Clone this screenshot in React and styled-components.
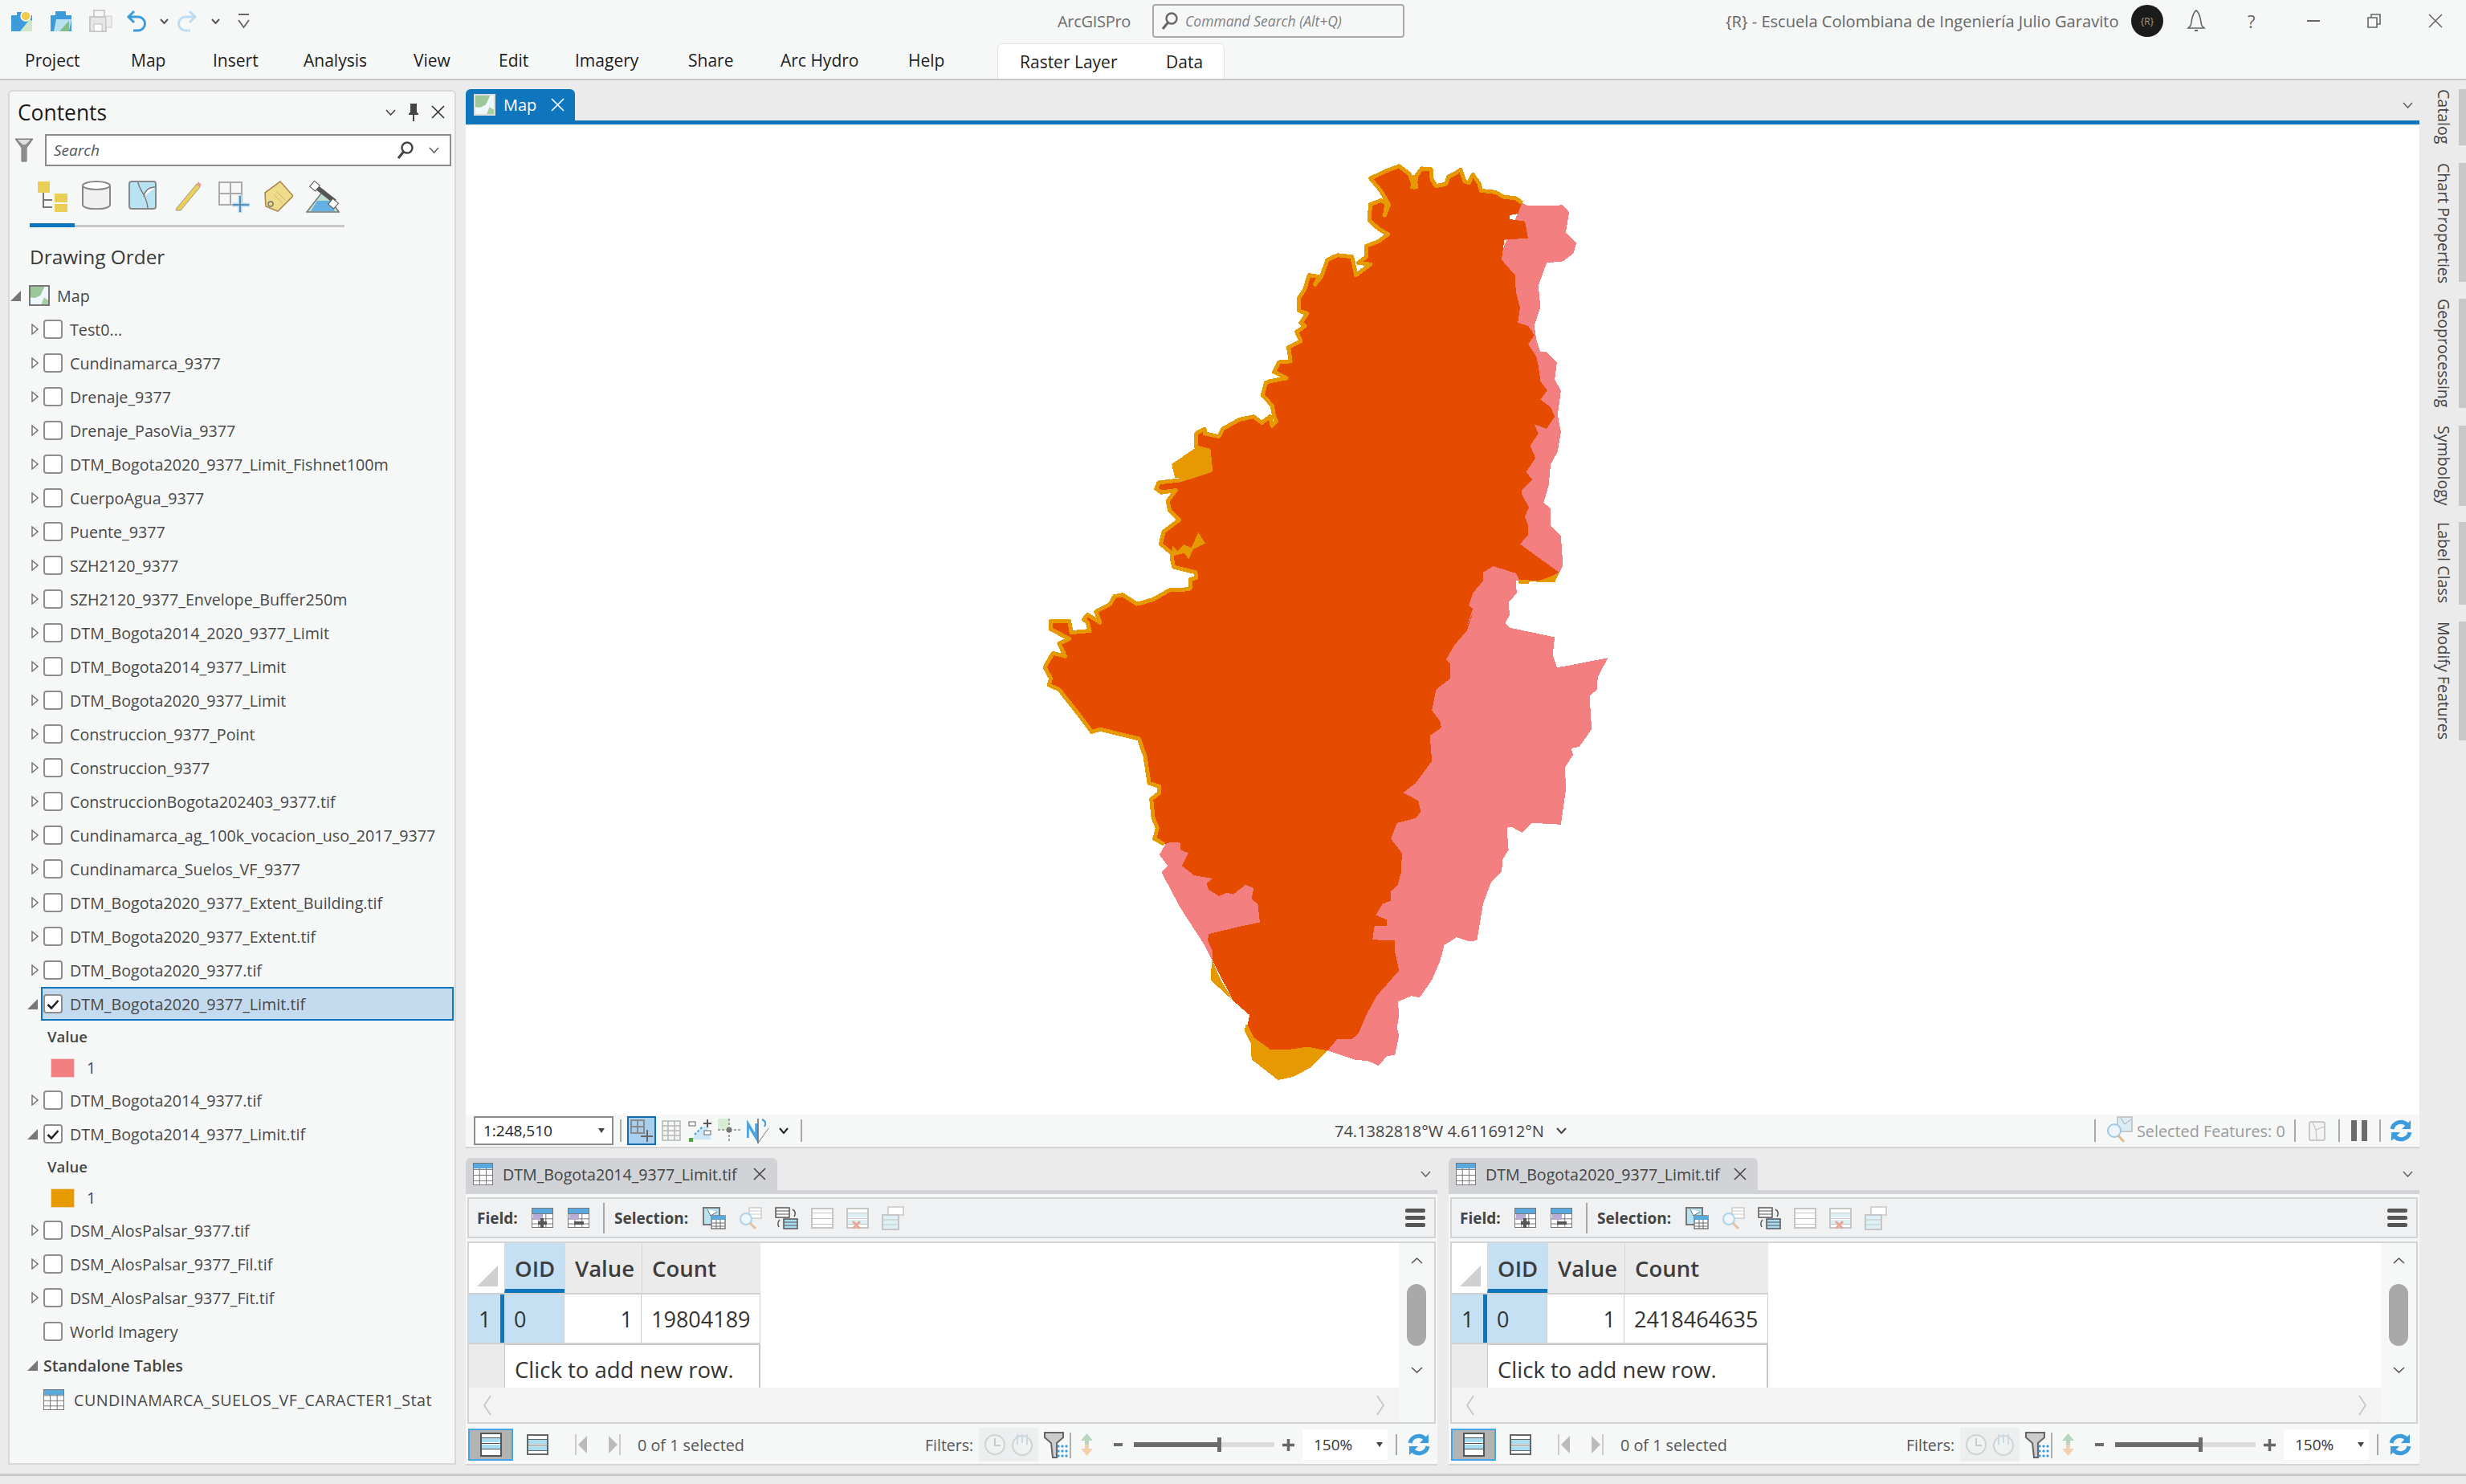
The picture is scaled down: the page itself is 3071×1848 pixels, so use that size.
import React from 'react';
import styled, { createGlobalStyle } from 'styled-components';

const FONT = '"Open Sans", "Noto Sans", "Liberation Sans", sans-serif';
const BLUE = '#0f76bd';
const PANEL = '#f6f8f8';
const WORK = '#ebebeb';
const LINE = '#c8c8c8';

const Global = createGlobalStyle`
  html, body { margin: 0; padding: 0; background: ${WORK}; }
  body { font-family: ${FONT}; overflow: hidden; }
`;

const IconSvg = styled.svg`
  display: block;
  flex: none;
  margin-left: ${(p) => p.$ml || 0}px;
`;

const I = ({ w, h, ml, children }) => (
  <IconSvg width={w} height={h} viewBox={`0 0 ${w} ${h}`} $ml={ml} fill="none">
    {children}
  </IconSvg>
);

/* ---------- small glyphs ---------- */
const Chevron = ({ ml, w = 14, h = 8, color = '#555', sw = 1.6, up }) => (
  <I w={w} h={h} ml={ml}>
    <path
      d={up ? `M1 ${h - 1}L${w / 2} 1L${w - 1} ${h - 1}` : `M1 1L${w / 2} ${h - 1}L${w - 1} 1`}
      stroke={color}
      strokeWidth={sw}
    />
  </I>
);

const SideArrow = ({ right }) => (
  <I w={10} h={26}>
    <path d={right ? 'M1 1L9 13L1 25' : 'M9 1L1 13L9 25'} stroke="#c4c4c4" strokeWidth="1.6" />
  </I>
);

const Close = ({ ml, s = 17, color = '#333', sw = 1.6 }) => (
  <I w={s} h={s} ml={ml}>
    <path d={`M1 1L${s - 1} ${s - 1}M${s - 1} 1L1 ${s - 1}`} stroke={color} strokeWidth={sw} />
  </I>
);

const Magnifier = ({ ml, color = '#444' }) => (
  <I w={22} h={24} ml={ml}>
    <circle cx="13" cy="9" r="6.5" stroke={color} strokeWidth="2.4" />
    <path d="M8.5 14L2 22" stroke={color} strokeWidth="3" />
  </I>
);

const TableGlyph = ({ w = 27, h = 27, ml, head = '#5aa9de', line = '#777', children }) => (
  <I w={w} h={h} ml={ml}>
    <rect x="0.5" y="0.5" width={w - 1} height={h - 1} fill="#fff" stroke={line} />
    <rect x="1" y="1" width={w - 2} height="6" fill={head} />
    {[0.3, 0.55, 0.8].map((f) => (
      <path key={f} d={`M1 ${h * f}H${w - 1}`} stroke={line} />
    ))}
    {[0.33, 0.66].map((f) => (
      <path key={f} d={`M${w * f} 7V${h - 1}`} stroke={line} />
    ))}
    {children}
  </I>
);

const Refresh = ({ ml }) => (
  <I w={30} h={30} ml={ml}>
    <path d="M4 13A11 11 0 0 1 23 8" stroke="#3c9bdc" strokeWidth="5" />
    <path d="M27 2V13H16Z" fill="#3c9bdc" />
    <path d="M26 17A11 11 0 0 1 7 22" stroke="#3c9bdc" strokeWidth="5" />
    <path d="M3 28V17H14Z" fill="#3c9bdc" />
  </I>
);

const RowsGlyph = ({ ml, w = 28, h = 26, line = '#777', fill = '#a9dcef', children }) => (
  <I w={w} h={h} ml={ml}>
    <rect x="1" y="1" width={w - 2} height={h - 2} fill="#fff" stroke={line} strokeWidth="2" />
    <rect x="2" y="7" width={w - 4} height="5" fill={fill} />
    <rect x="2" y="15" width={w - 4} height="5" fill={fill} />
    <path d={`M2 6.5H${w - 2}M2 13.5H${w - 2}M2 20.5H${w - 2}`} stroke={line} />
    {children}
  </I>
);

/* ---------- title bar ---------- */
const Shell = styled.div`
  width: 3071px;
  height: 1848px;
  display: flex;
  flex-direction: column;
  overflow: hidden;
  background: ${WORK};
  color: #222;
`;

const TitleBar = styled.div`
  height: 52px;
  display: flex;
  align-items: center;
  background: ${PANEL};
`;

const Qat = styled.div`
  width: 1317px;
  padding-left: 13px;
  box-sizing: border-box;
  display: flex;
  align-items: center;
`;

const AppName = styled.div`
  width: 118px;
  font-size: 20px;
  color: #6d6d6d;
  letter-spacing: -0.3px;
`;

const CommandBox = styled.div`
  width: 314px;
  height: 42px;
  box-sizing: border-box;
  border: 2px solid #a9a9a9;
  border-radius: 4px;
  display: flex;
  align-items: center;
  padding-left: 9px;
  gap: 8px;
  font-size: 17.5px;
  font-style: italic;
  color: #7f7f7f;
`;

const UserArea = styled.div`
  margin-left: auto;
  display: flex;
  align-items: center;
  height: 52px;
  padding-right: 29px;
`;

const UserName = styled.div`
  font-size: 20.1px;
  color: #666;
  width: 505px;
  white-space: nowrap;
`;

const Avatar = styled.div`
  width: 40px;
  height: 40px;
  border-radius: 50%;
  background: #1b1b1b;
  color: #9a9a9a;
  font-size: 12px;
  display: flex;
  align-items: center;
  justify-content: center;
`;

const Help = styled.div`
  margin-left: 52px;
  width: 14px;
  font-size: 22px;
  color: #666;
`;

/* ---------- ribbon ---------- */
const Ribbon = styled.div`
  height: 46px;
  display: flex;
  padding-left: 31px;
  background: ${PANEL};
  border-bottom: 2px solid ${LINE};
  position: relative;
  z-index: 1;
`;

const RibbonTab = styled.div`
  width: ${(p) => p.$w}px;
  flex: none;
  font-size: 21px;
  line-height: 46px;
  white-space: nowrap;
  color: #1e1e1e;
`;

const ContextGroup = styled.div`
  width: 283px;
  height: 44px;
  margin: 2px 0 -1px;
  padding-left: 27px;
  box-sizing: border-box;
  display: flex;
  background: #fff;
  border: 1px solid #e4e4e4;
  border-bottom: none;
  border-radius: 6px 6px 0 0;

  ${RibbonTab} {
    line-height: 44px;
  }
`;

/* ---------- layout ---------- */
const Workspace = styled.div`
  height: 1735px;
  display: flex;
  border-bottom: 3px solid ${LINE};
`;

const Contents = styled.div`
  width: 558px;
  height: 1712px;
  margin: 12px 0 0 10px;
  box-sizing: border-box;
  background: ${PANEL};
  border: 2px solid #d8d8d8;
  border-radius: 6px 6px 0 0;
  flex: none;
  overflow: hidden;
`;

const ContentsHead = styled.div`
  height: 53px;
  display: flex;
  align-items: center;
  padding: 0 12px 2px 10px;
  box-sizing: border-box;
`;

const ContentsTitle = styled.div`
  font-size: 26.4px;
  color: #1a1a1a;
  width: 462px;
`;

const SearchRow = styled.div`
  height: 40px;
  display: flex;
  align-items: center;
  padding-left: 6px;
`;

const SearchBox = styled.div`
  width: 506px;
  height: 40px;
  margin-left: 14px;
  box-sizing: border-box;
  border: 2px solid #8c8c8c;
  background: #fff;
  display: flex;
  align-items: center;
  padding-left: 9px;
  font-size: 19px;
  font-style: italic;
  color: #555;
`;

const SearchLabel = styled.span`
  width: 427px;
`;

const ViewTools = styled.div`
  height: 76px;
  margin-left: 25px;
  width: 392px;
  box-sizing: border-box;
  display: flex;
  align-items: flex-start;
  padding: 18px 0 0 8px;
  border-bottom: 5px solid transparent;
  position: relative;
`;

const ViewUnderline = styled.div`
  position: absolute;
  left: 0;
  right: 0;
  bottom: -5px;
  height: 3px;
  background: ${LINE};

  &::before {
    content: '';
    position: absolute;
    left: 0;
    bottom: 0;
    width: 56px;
    height: 5px;
    background: ${BLUE};
  }
`;

const DrawingOrder = styled.div`
  height: 64px;
  padding-left: 25px;
  font-size: 24.4px;
  line-height: 74px;
  color: #3a3a3a;
`;

const Row = styled.div`
  height: ${(p) => p.$h || 42}px;
  display: flex;
  align-items: center;
  font-size: 19.7px;
  color: #484848;
  white-space: nowrap;
`;

const Expander = styled.div`
  width: ${(p) => p.$w || 39}px;
  flex: none;
  display: flex;
  justify-content: flex-end;
  padding-right: ${(p) => (p.$open ? 4 : 3)}px;
  box-sizing: border-box;
`;

const RowBody = styled.div`
  flex: 1;
  height: 100%;
  margin-right: 1px;
  box-sizing: border-box;
  display: flex;
  align-items: center;
  gap: ${(p) => p.$gap ?? 9}px;
  padding-left: ${(p) => (p.$selected ? 1 : 3)}px;
  background: ${(p) => (p.$selected ? '#c4daef' : 'transparent')};
  border: 2px solid ${(p) => (p.$selected ? BLUE : 'transparent')};
  border-left-width: ${(p) => (p.$selected ? 2 : 0)}px;
`;

const Check = styled.div`
  width: 24px;
  height: 24px;
  box-sizing: border-box;
  flex: none;
  background: #fff;
  border: 2px solid #8e8e8e;
  border-radius: 4px;
  display: flex;
  align-items: center;
  justify-content: center;
`;

const LegendTitle = styled(Row)`
  padding-left: 47px;
  font-weight: 600;
  font-size: 18.5px;
  color: #444;
`;

const Swatch = styled.div`
  width: 28px;
  height: 22px;
  margin-left: 52px;
  margin-right: 16px;
  background: ${(p) => p.$color};
  box-shadow: 0 0 0 1px ${(p) => p.$color}55;
`;

const SectionName = styled.span`
  font-weight: 600;
  color: #444;
`;

const MapName = styled.span`
  margin-left: 6px;
`;

const StandaloneName = styled.span`
  letter-spacing: 0.5px;
`;

const Open = () => (
  <I w={13} h={13}>
    <path d="M13 0V13H0Z" fill="#777" />
  </I>
);

const Shut = () => (
  <I w={9} h={14}>
    <path d="M1 1L8 7L1 13Z" fill="#fff" stroke="#777" strokeWidth="1.5" />
  </I>
);

const Tick = () => (
  <I w={16} h={13}>
    <path d="M1.5 7L6 11.5L14.5 2" stroke="#222" strokeWidth="2.6" />
  </I>
);

const Layer = ({ name, open, checked, selected, none }) => (
  <Row>
    <Expander $open={open}>{none ? null : open ? <Open /> : <Shut />}</Expander>
    <RowBody $selected={selected}>
      <Check>{checked && <Tick />}</Check>
      <span>{name}</span>
    </RowBody>
  </Row>
);

const Legend = ({ color }) => (
  <>
    <LegendTitle $h={39}>Value</LegendTitle>
    <Row $h={39}>
      <Swatch $color={color} />
      <span>1</span>
    </Row>
  </>
);

const LAYERS_TOP = [
  'Test0...',
  'Cundinamarca_9377',
  'Drenaje_9377',
  'Drenaje_PasoVia_9377',
  'DTM_Bogota2020_9377_Limit_Fishnet100m',
  'CuerpoAgua_9377',
  'Puente_9377',
  'SZH2120_9377',
  'SZH2120_9377_Envelope_Buffer250m',
  'DTM_Bogota2014_2020_9377_Limit',
  'DTM_Bogota2014_9377_Limit',
  'DTM_Bogota2020_9377_Limit',
  'Construccion_9377_Point',
  'Construccion_9377',
  'ConstruccionBogota202403_9377.tif',
  'Cundinamarca_ag_100k_vocacion_uso_2017_9377',
  'Cundinamarca_Suelos_VF_9377',
  'DTM_Bogota2020_9377_Extent_Building.tif',
  'DTM_Bogota2020_9377_Extent.tif',
  'DTM_Bogota2020_9377.tif',
];

const MapThumb = ({ ml, s = 26, border = '#777' }) => (
  <I w={s} h={s} ml={ml}>
    <rect x="1" y="1" width={s - 2} height={s - 2} fill="#eef7fb" stroke={border} strokeWidth="2" />
    <path d={`M2 2H${s * 0.75}L${s * 0.55} ${s * 0.5}L${s * 0.3} ${s * 0.62}L2 ${s * 0.6}Z`} fill="#9cc79a" />
    <path d={`M${s * 0.6} ${s - 2}L${s * 0.72} ${s * 0.6}L${s - 2} ${s * 0.72}V${s - 2}Z`} fill="#a8cfa0" />
  </I>
);

/* ---------- map column ---------- */
const MapColumn = styled.div`
  width: 2433px;
  margin-left: 12px;
  flex: none;
  display: flex;
  flex-direction: column;
`;

const MapTabRow = styled.div`
  height: 50px;
  padding-top: 11px;
  box-sizing: border-box;
  display: flex;
  align-items: stretch;
  justify-content: space-between;
`;

const MapTab = styled.div`
  width: 136px;
  background: ${BLUE};
  border-radius: 6px 6px 0 0;
  display: flex;
  align-items: center;
  padding-left: 10px;
  box-sizing: border-box;
  color: #fff;
  font-size: 20px;
`;

const MapTabLabel = styled.span`
  margin-left: 10px;
  width: 59px;
`;

const TabMenu = styled.div`
  display: flex;
  align-items: center;
  padding-right: 8px;
`;

const BlueRule = styled.div`
  height: 5px;
  background: ${BLUE};
`;

const MapCanvas = styled.div`
  height: 1233px;
  background: #fff;
`;

const MapSvg = styled.svg`
  display: block;
`;

const MapStatus = styled.div`
  height: 42px;
  display: flex;
  align-items: center;
  box-sizing: border-box;
  background: ${PANEL};
  border-bottom: 2px solid #d4d4d4;
  padding-left: 10px;
`;

const ScaleBox = styled.div`
  width: 174px;
  height: 36px;
  box-sizing: border-box;
  flex: none;
  border: 2px solid #8c8c8c;
  background: #fff;
  display: flex;
  align-items: center;
  justify-content: space-between;
  padding: 0 9px 0 10px;
  font-size: 19px;
  color: #222;
`;

const Caret = styled.div`
  width: 0;
  height: 0;
  flex: none;
  margin-left: ${(p) => p.$ml || 0}px;
  border-left: 4px solid transparent;
  border-right: 4px solid transparent;
  border-top: 6px solid #444;
`;

const Sep = styled.div`
  width: 2px;
  height: ${(p) => p.$h || 28}px;
  flex: none;
  margin-left: ${(p) => p.$ml || 0}px;
  background: #a8a8a8;
`;

const ToggleOn = styled.div`
  width: 36px;
  height: 36px;
  flex: none;
  margin-left: 7px;
  box-sizing: border-box;
  background: #a6d0ee;
  border: 2px solid #0f6cb0;
  display: flex;
  align-items: center;
  justify-content: center;
`;

const Coords = styled.div`
  margin-left: 663px;
  width: 276px;
  font-size: 20px;
  color: #444;
  white-space: nowrap;
  flex: none;
`;

const StatusRight = styled.div`
  margin-left: auto;
  display: flex;
  align-items: center;
  padding-right: 8px;
`;

const SelectedLabel = styled.div`
  font-size: 19.8px;
  color: #9b9b9b;
  width: 196px;
  margin-left: 4px;
  white-space: nowrap;
`;

const PauseBar = styled.div`
  width: 7px;
  height: 26px;
  margin-left: ${(p) => p.$ml}px;
  background: #6c6c6c;
`;

/* ---------- table panes ---------- */
const Panes = styled.div`
  margin-top: 12px;
  display: grid;
  grid-template-columns: 1210px 1209px;
  column-gap: 14px;
`;

const Pane = styled.div`
  display: flex;
  flex-direction: column;
`;

const PaneTabs = styled.div`
  height: 40px;
  display: flex;
  align-items: center;
  justify-content: space-between;
`;

const PaneTab = styled.div`
  width: ${(p) => p.$w}px;
  height: 40px;
  box-sizing: border-box;
  background: #d2d3d6;
  border-radius: 6px 6px 0 0;
  display: flex;
  align-items: center;
  padding-left: 9px;
  font-size: 19.6px;
  color: #444;
  white-space: nowrap;
`;

const PaneTabLabel = styled.span`
  width: ${(p) => p.$w}px;
  margin-left: 12px;
`;

const PaneRule = styled.div`
  height: 5px;
  background: #d2d3d6;
`;

const PaneBody = styled.div`
  background: ${PANEL};
  padding: 4px 2px 0;
  border-bottom: 2px solid #d4d4d4;
`;

const TableBar = styled.div`
  height: 51px;
  box-sizing: border-box;
  border: 2px solid #d2d3d6;
  background: #f0f1f3;
  display: flex;
  align-items: center;
  padding-left: 10px;
  position: relative;
`;

const BarLabel = styled.div`
  width: ${(p) => p.$w}px;
  flex: none;
  font-size: 19px;
  font-weight: 700;
  color: #444;
  margin-left: ${(p) => p.$ml || 0}px;
`;

const Hamburger = styled.div`
  margin-left: auto;
  margin-right: 11px;
  width: 25px;
  display: flex;
  flex-direction: column;
  gap: 4px;
`;

const HamburgerBar = styled.div`
  height: 5px;
  border-radius: 2px;
  background: #555;
`;

const GridFrame = styled.div`
  height: 227px;
  margin-top: 4px;
  box-sizing: border-box;
  border: 2px solid #d2d3d6;
  display: flex;
  background: #fff;
`;

const GridMain = styled.div`
  flex: 1;
  display: flex;
  flex-direction: column;
`;

const GridRows = styled.div`
  height: 180px;
  background: #fff;
  overflow: hidden;
`;

const GridRow = styled.div`
  display: grid;
  box-sizing: border-box;
  grid-template-columns: ${(p) => p.$cols};
  width: fit-content;
  height: ${(p) => p.$h}px;
  border-bottom: ${(p) => p.$rule || 0}px solid #d0d0d0;
`;

const HeadCell = styled.div`
  box-sizing: border-box;
  background: ${(p) => (p.$active ? '#c5e0f3' : WORK)};
  border-left: 1px solid #d8d8d8;
  border-bottom: ${(p) => (p.$active ? `5px solid ${BLUE}` : 'none')};
  display: flex;
  align-items: center;
  padding: ${(p) => (p.$active ? '5px' : '0')} 0 0 12px;
  font-size: 27.5px;
  font-weight: 600;
  color: #3d3d3d;
`;

const Corner = styled.div`
  background: #fff;
  display: flex;
  align-items: flex-end;
  justify-content: flex-end;
  padding: 0 8px 8px 0;
`;

const Cell = styled.div`
  box-sizing: border-box;
  background: ${(p) => (p.$active ? '#c5e0f3' : '#fff')};
  border-right: 1px solid #d0d0d0;
  display: flex;
  align-items: center;
  justify-content: ${(p) => (p.$right ? 'flex-end' : 'flex-start')};
  padding: 0 10px 0 12px;
  font-size: 27px;
  color: #333;
`;

const RowHead = styled(Cell)`
  padding-left: 12px;
  border-right: 5px solid ${BLUE};
`;

const NewHead = styled.div`
  background: ${WORK};
`;

const NewCell = styled.div`
  grid-column: span 3;
  background: #fff;
  box-sizing: border-box;
  border-left: 1px solid ${LINE};
  border-right: 2px solid ${LINE};
  border-top: 1px solid ${LINE};
  padding-left: 12px;
  font-size: 27.5px;
  line-height: 62px;
  color: #333;
  white-space: nowrap;
`;

const HScroll = styled.div`
  flex: 1;
  background: #f3f3f3;
  display: flex;
  align-items: center;
  justify-content: space-between;
  padding: 0 18px;
`;

const VScroll = styled.div`
  width: 44px;
  flex: none;
  background: ${PANEL};
  display: flex;
  flex-direction: column;
  align-items: center;
  padding-top: 18px;
`;

const Thumb = styled.div`
  width: 24px;
  height: 77px;
  margin: 25px 0 26px;
  border-radius: 12px;
  background: #a9a9a9;
`;

const PaneStatus = styled.div`
  height: 48px;
  margin-top: 2px;
  display: flex;
  align-items: center;
`;

const RowViewOn = styled.div`
  width: 56px;
  height: 40px;
  flex: none;
  box-sizing: border-box;
  margin-left: 1px;
  background: #b3b3b3;
  border: 2px solid #45a5e6;
  display: flex;
  align-items: center;
  justify-content: center;
`;

const SelectedCount = styled.div`
  width: ${(p) => p.$w}px;
  flex: none;
  margin-left: 20px;
  font-size: 19.8px;
  color: #555;
  white-space: nowrap;
`;

const FiltersLabel = styled.div`
  font-size: 19.5px;
  color: #555;
  width: 67px;
  flex: none;
`;

const FilterBlock = styled.div`
  width: 74px;
  height: 42px;
  flex: none;
  background: #eceef0;
  display: flex;
  align-items: center;
  justify-content: space-evenly;
`;

const Slider = styled.div`
  width: 175px;
  height: 6px;
  flex: none;
  margin-left: 14px;
  background: #dcdcdc;
  position: relative;
`;

const SliderFill = styled.div`
  position: absolute;
  left: 0;
  top: 0;
  bottom: 0;
  width: 106px;
  background: #6c6c6c;
`;

const SliderKnob = styled.div`
  position: absolute;
  left: 104px;
  top: -6px;
  width: 5px;
  height: 18px;
  background: #6c6c6c;
`;

const ZoomBox = styled.div`
  width: 106px;
  height: 38px;
  flex: none;
  margin-left: 10px;
  background: #fff;
  display: flex;
  align-items: center;
  padding-left: 14px;
  box-sizing: border-box;
  font-size: 19px;
  color: #333;
`;

const ZoomText = styled.span`
  width: 78px;
`;

/* ---------- right rail ---------- */
const Rail = styled.div`
  width: 58px;
  flex: none;
  padding-top: 11px;
  display: flex;
  flex-direction: column;
  align-items: flex-end;
`;

const RailTab = styled.div`
  height: ${(p) => p.$h}px;
  margin-bottom: ${(p) => p.$gap}px;
  width: 100%;
  box-sizing: border-box;
  display: flex;
  justify-content: flex-end;
  padding-right: 6px;
  border-right: 9px solid ${LINE};
`;

const RailText = styled.div`
  writing-mode: vertical-rl;
  font-size: 19.6px;
  width: 32px;
  line-height: 26px;
  color: #444;
  white-space: nowrap;
`;

const RAIL = [
  ['Catalog', 70, 22],
  ['Chart Properties', 148, 21],
  ['Geoprocessing', 136, 22],
  ['Symbology', 100, 20],
  ['Label Class', 103, 21],
  ['Modify Features', 148, 0],
];

/* ---------- map drawing ---------- */
// traced from crops of the map, then taken back to page pixels
const top = (pts) => pts.map(([x, y]) => [1250 + x / 1.96, 180 + y / 2.613]);
const low = (pts) => pts.map(([x, y]) => [1250 + x / 1.96, 750 + y / 2.529]);
const toPoints = (pts) => pts.map(([x, y]) => `${x.toFixed(1)},${y.toFixed(1)}`).join(' ');

const COAST = [
  ...top([
    [1265, 190], [1250, 175], [1220, 170], [1200, 155], [1165, 150], [1160, 125], [1145, 98], [1135, 125], [1125, 120],
    [1115, 82], [1100, 95], [1085, 105], [1080, 128], [1055, 135], [1045, 115], [1043, 80], [1020, 78], [1008, 100],
    [1003, 140], [990, 95], [965, 70], [935, 85], [895, 110], [920, 150], [940, 195], [930, 230], [935, 190], [920, 182],
    [895, 195], [892, 245], [915, 275], [938, 292], [915, 315], [885, 330], [885, 365], [865, 385], [895, 390], [860, 425],
    [850, 365], [815, 360], [790, 375], [775, 430], [760, 455], [770, 430], [745, 425], [735, 470], [720, 500], [720, 540],
    [740, 550], [725, 580], [735, 590], [715, 610], [725, 640], [695, 660], [700, 705], [672, 708], [660, 740], [690, 760],
    [650, 770], [640, 775], [632, 815], [655, 850], [660, 885], [665, 900], [655, 915], [650, 885], [630, 905], [610, 885],
    [575, 895], [535, 925], [525, 950], [490, 940], [490, 925], [470, 940], [470, 985], [500, 995], [505, 1060], [465, 1078],
    [430, 1092], [378, 1100], [372, 1120], [385, 1132], [420, 1125], [400, 1160], [405, 1190], [428, 1222], [390, 1260],
    [383, 1300], [410, 1330], [410, 1345], [415, 1375], [468, 1392], [470, 1410], [455, 1415], [455, 1445], [430, 1450],
    [405, 1450], [365, 1480], [340, 1490], [325, 1495], [290, 1465], [270, 1470], [260, 1495], [225, 1520], [235, 1555],
    [205, 1530], [195, 1545],
  ]),
  ...low([
    [205, 65], [210, 90], [165, 95], [160, 60], [115, 60], [115, 85], [160, 115], [135, 130], [150, 170], [120, 160],
    [100, 205], [115, 240], [110, 260], [135, 275], [175, 340], [215, 408], [235, 400], [330, 430], [345, 485], [355, 570],
    [380, 580], [380, 600], [360, 620], [365, 680], [375, 710], [368, 745], [392, 762],
  ]),
];

const RED_REST = [
  ...low([
    [410, 755], [430, 755], [432, 780], [450, 790], [435, 830], [465, 860], [510, 870], [495, 885], [500, 905], [525, 925],
    [545, 915], [560, 920], [590, 890], [610, 900], [605, 935], [620, 950], [625, 1008], [580, 1020], [500, 1045], [498, 1065],
    [510, 1100], [510, 1130], [560, 1255], [600, 1300], [595, 1330], [610, 1370], [650, 1408], [700, 1408], [740, 1400],
    [790, 1412], [815, 1375], [850, 1375], [865, 1360], [885, 1300], [910, 1240], [965, 1160], [955, 1100], [955, 1065],
    [900, 1063], [905, 1020], [935, 1020], [935, 1000], [908, 985], [925, 950], [945, 940], [945, 910], [962, 890], [970, 850],
    [972, 790], [945, 745], [960, 695], [1005, 680], [1018, 660], [1012, 625], [975, 600], [1005, 570], [1045, 500], [1040, 420],
    [1068, 395], [1065, 375], [1045, 340], [1055, 275], [1090, 240], [1090, 195], [1080, 180], [1100, 135], [1130, 90], [1145, 35],
  ]),
  ...top([
    [1130, 1568], [1145, 1510], [1135, 1500], [1145, 1460], [1170, 1420], [1170, 1392], [1195, 1372], [1250, 1395], [1258, 1415],
    [1305, 1420], [1330, 1410], [1355, 1392], [1260, 1300], [1280, 1270], [1280, 1240], [1272, 1210], [1282, 1180], [1265, 1140],
    [1265, 1125], [1290, 1090], [1275, 1065], [1298, 1020], [1285, 980], [1305, 940], [1295, 910], [1325, 925], [1345, 885],
    [1335, 855], [1310, 830], [1327, 800], [1310, 770], [1305, 720], [1300, 690], [1280, 650], [1295, 620], [1280, 590], [1255, 580],
    [1260, 530], [1250, 480], [1248, 425], [1215, 375], [1222, 310], [1280, 305], [1272, 250], [1235, 243], [1235, 230], [1255, 225],
  ]),
];

const PINK = [
  ...top([
    [1265, 190], [1280, 200], [1365, 197], [1380, 220], [1372, 285], [1398, 320], [1390, 355], [1365, 380], [1325, 385], [1305, 460],
    [1310, 530], [1295, 590], [1300, 635], [1310, 675], [1325, 675], [1350, 710], [1345, 765], [1360, 800], [1352, 880], [1360, 935],
    [1352, 1000], [1335, 1040], [1330, 1110], [1318, 1165], [1335, 1185], [1335, 1240], [1360, 1275], [1365, 1370], [1350, 1410],
    [1250, 1420], [1252, 1460], [1232, 1490], [1235, 1530], [1220, 1568],
  ]),
  ...low([
    [1220, 60], [1235, 80], [1345, 110], [1340, 165], [1350, 205], [1375, 200], [1475, 175], [1450, 235], [1448, 275], [1430, 295],
    [1435, 400], [1405, 455], [1385, 460], [1390, 480], [1370, 520], [1372, 590], [1360, 700], [1290, 695], [1265, 725], [1240, 708],
    [1228, 710], [1232, 780], [1218, 810], [1215, 850], [1190, 880], [1170, 950], [1155, 1065], [1135, 1068], [1105, 1055], [1075, 1080],
    [1065, 1130], [1045, 1190], [1015, 1245], [995, 1240], [962, 1258], [965, 1300], [960, 1340], [965, 1365], [955, 1425], [935, 1430],
    [915, 1460], [890, 1445], [855, 1440], [790, 1412], [700, 1300], [600, 1300], [570, 1265], [510, 1130], [490, 1080], [470, 1040],
    [430, 960], [385, 850], [400, 830], [380, 795], [395, 762], [700, 500],
  ]),
];

const AMBER_PATCHES = [
  top([[470, 985], [410, 1040], [418, 1085], [465, 1080], [505, 1060], [500, 995]]),
  top([[475, 1262], [492, 1298], [462, 1318], [452, 1348], [440, 1330], [410, 1340], [412, 1305], [425, 1322], [440, 1302], [458, 1312]]),
  top([[992, 143], [1012, 143], [1008, 100], [998, 100]]),
  top([[1255, 1415], [1258, 1430], [1280, 1430], [1285, 1420], [1310, 1425], [1345, 1425], [1355, 1395], [1330, 1408], [1305, 1420]]),
  low([[508, 1125], [505, 1190], [560, 1255], [530, 1190]]),
  low([[590, 1330], [588, 1350], [603, 1390], [605, 1440], [670, 1505], [705, 1495], [750, 1465], [790, 1412], [740, 1400], [700, 1408], [650, 1408], [610, 1370], [595, 1330]]),
];

const StudyArea = () => (
  <MapSvg width="2433" height="1233" viewBox="580 155 2433 1233" shapeRendering="crispEdges">
    <polygon points={toPoints(PINK)} fill="#f47f81" />
    <polygon points={toPoints([...COAST, ...RED_REST])} fill="#e64c00" />
    <polyline points={toPoints(COAST)} fill="none" stroke="#e69900" strokeWidth="5" strokeLinejoin="round" />
    {AMBER_PATCHES.map((p, i) => (
      <polygon key={i} points={toPoints(p)} fill="#e69900" />
    ))}
  </MapSvg>
);

/* ---------- toolbars' icons ---------- */
const ContentsIcons = () => (
  <>
    <I w={39} h={39}>
      <rect x="2" y="1" width="15" height="14" fill="#e9cf55" />
      <path d="M9 15V33H20M9 24H20" stroke="#777" strokeWidth="2" />
      <rect x="23" y="16" width="16" height="11" fill="#e9cf55" />
      <rect x="23" y="29" width="16" height="10" fill="#e9cf55" />
    </I>
    <I w={36} h={36} ml={18}>
      <path d="M1 6V30C1 37 35 37 35 30V6" fill="#f0f0f0" stroke="#888" strokeWidth="2" />
      <ellipse cx="18" cy="6" rx="17" ry="5" fill="#fff" stroke="#888" strokeWidth="2" />
    </I>
    <I w={35} h={36} ml={22}>
      <rect x="1" y="1" width="33" height="34" rx="3" fill="#b7e3f3" stroke="#888" strokeWidth="2" />
      <path d="M12 2C13 12 22 16 24 34M34 8C24 8 20 14 19 20" stroke="#777" strokeWidth="1.5" fill="#fff" />
    </I>
    <I w={34} h={38} ml={22}>
      <path d="M3 34L28 4L32 8L8 37L2 37Z" fill="#e9cf55" stroke="#999" />
      <path d="M28 4L30 1L34 5L32 8Z" fill="#eda0a0" />
    </I>
    <I w={40} h={40} ml={20}>
      <path d="M2 2H30V30H2ZM16 2V30M2 16H30" stroke="#aaa" strokeWidth="2" />
      <path d="M28 18V40M18 30H40" stroke="#b5dcf2" strokeWidth="5" />
      <path d="M28 19V39M19 30H39" stroke="#5b8db0" strokeWidth="2" />
    </I>
    <I w={37} h={40} ml={17}>
      <path d="M21 1L37 19L18 38L3 32L2 15Z" fill="#efdc8b" stroke="#a98a56" strokeWidth="1.6" />
      <circle cx="9" cy="29" r="3" stroke="#777" strokeWidth="1.5" />
      <path d="M13 17L24 28M16 13L27 24" stroke="#c9b56c" />
    </I>
    <I w={42} h={40} ml={16}>
      <path d="M1 39L22 12L41 39Z" fill="#bfe0cf" stroke="#777" strokeWidth="1.5" />
      <path d="M6 38L14 25H30L36 38Z" fill="#64b0e3" />
      <path d="M8 4L36 26" stroke="#555" strokeWidth="6" />
      <rect x="7" y="2" width="9" height="9" fill="#fff" stroke="#555" transform="rotate(40 11 6)" />
      <rect x="30" y="24" width="9" height="9" fill="#fff" stroke="#555" transform="rotate(40 34 28)" />
    </I>
  </>
);

const FieldIcons = () => (
  <>
    <TableGlyph ml={0} h={25}>
      <rect x="2" y="8" width="12" height="7" fill="#b9aad6" />
      <path d="M13 13V25M8 19H19" stroke="#555" strokeWidth="4" />
    </TableGlyph>
    <TableGlyph ml={18} h={25}>
      <rect x="2" y="8" width="12" height="7" fill="#b9aad6" />
      <path d="M8 19H20" stroke="#555" strokeWidth="4" />
    </TableGlyph>
  </>
);

const SelectionIcons = () => (
  <>
    <I w={29} h={28}>
      <rect x="1" y="1" width="20" height="21" fill="#b7e3f3" stroke="#777" strokeWidth="2" />
      <path d="M6 3L10 11L18 6" stroke="#666" fill="#fff" />
      <rect x="11" y="11" width="17" height="16" fill="#fff" stroke="#777" strokeWidth="1.5" />
      <rect x="11" y="11" width="17" height="5" fill="#5aa9de" />
      <path d="M12 20H27M12 24H27M17 16V27M22 16V27" stroke="#666" />
    </I>
    <I w={29} h={28} ml={16}>
      <rect x="13" y="1" width="15" height="13" fill="#fff" stroke="#ccc" strokeWidth="1.5" />
      <path d="M13 5H28M13 9H28" stroke="#ccc" />
      <circle cx="9" cy="15" r="7" fill="#eef6fb" stroke="#aed2ea" strokeWidth="2" />
      <path d="M14 20L21 27" stroke="#e3c3a4" strokeWidth="3" />
    </I>
    <I w={29} h={28} ml={16}>
      <rect x="1" y="1" width="17" height="12" fill="#fff" stroke="#555" strokeWidth="1.5" />
      <path d="M1 5H18M1 9H18" stroke="#555" />
      <rect x="11" y="15" width="17" height="12" fill="#a9dcef" stroke="#555" strokeWidth="1.5" />
      <path d="M11 19H28M11 23H28" stroke="#555" />
      <path d="M22 3C26 5 26 9 24 12M5 25C3 21 4 18 6 16" stroke="#555" strokeWidth="1.5" />
    </I>
    <RowsGlyph ml={16} line="#c6c6c6" fill="#fff" />
    <RowsGlyph ml={16} line="#c6c6c6" fill="#dcf0f6">
      <path d="M8 17L17 26M17 17L8 26" stroke="#e9a897" strokeWidth="3" />
    </RowsGlyph>
    <I w={28} h={30} ml={16}>
      <rect x="8" y="1" width="19" height="10" fill="#fff" stroke="#c6c6c6" strokeWidth="1.5" />
      <rect x="1" y="11" width="20" height="18" fill="#dcf0f6" stroke="#c6c6c6" strokeWidth="2" />
      <path d="M1 17H21M1 23H21" stroke="#c6c6c6" />
    </I>
  </>
);

const TablePane = ({ name, count, tabW, labelW, cols, selW, filtersGap, sliderGap }) => (
  <Pane>
    <PaneTabs>
      <PaneTab $w={tabW}>
        <TableGlyph w={25} h={28} />
        <PaneTabLabel $w={labelW}>{name}</PaneTabLabel>
        <Close s={16} color="#444" />
      </PaneTab>
      <TabMenu>
        <Chevron w={13} h={8} color="#666" />
      </TabMenu>
    </PaneTabs>
    <PaneRule />
    <PaneBody>
      <TableBar>
        <BarLabel $w={68}>Field:</BarLabel>
        <FieldIcons />
        <Sep $h={38} $ml={17} />
        <BarLabel $w={110} $ml={12}>Selection:</BarLabel>
        <SelectionIcons />
        <Hamburger>
          <HamburgerBar />
          <HamburgerBar />
          <HamburgerBar />
        </Hamburger>
      </TableBar>
      <GridFrame>
        <GridMain>
          <GridRows>
            <GridRow $cols={cols} $h={64} $rule={2}>
              <Corner>
                <I w={26} h={26}>
                  <path d="M26 0V26H0Z" fill="#cfcfcf" />
                </I>
              </Corner>
              <HeadCell $active>OID</HeadCell>
              <HeadCell>Value</HeadCell>
              <HeadCell>Count</HeadCell>
            </GridRow>
            <GridRow $cols={cols} $h={62} $rule={2}>
              <RowHead $active>1</RowHead>
              <Cell $active>0</Cell>
              <Cell $right>1</Cell>
              <Cell>{count}</Cell>
            </GridRow>
            <GridRow $cols={cols} $h={54}>
              <NewHead />
              <NewCell>Click to add new row.</NewCell>
            </GridRow>
          </GridRows>
          <HScroll>
            <SideArrow />
            <SideArrow right />
          </HScroll>
        </GridMain>
        <VScroll>
          <Chevron w={15} h={8} color="#555" up />
          <Thumb />
          <Chevron w={15} h={8} color="#555" />
        </VScroll>
      </GridFrame>
      <PaneStatus>
        <RowViewOn>
          <RowsGlyph w={27} h={30} line="#555" />
        </RowViewOn>
        <RowsGlyph ml={17} w={27} h={26} line="#666" />
        <I w={18} h={26} ml={32}>
          <path d="M2 0V26" stroke="#ccc" strokeWidth="2" />
          <path d="M16 2L5 13L16 24Z" fill="#bbb" />
        </I>
        <I w={18} h={26} ml={23}>
          <path d="M16 0V26" stroke="#ccc" strokeWidth="2" />
          <path d="M2 2L13 13L2 24Z" fill="#bbb" />
        </I>
        <SelectedCount $w={selW}>0 of 1 selected</SelectedCount>
        <FiltersLabel>Filters:</FiltersLabel>
        <FilterBlock>
          <I w={28} h={28}>
            <circle cx="14" cy="14" r="12" fill="#eef2f0" stroke="#d0d4d2" strokeWidth="2" />
            <path d="M14 6V15H21" stroke="#c8ccca" strokeWidth="2" />
          </I>
          <I w={28} h={28}>
            <circle cx="14" cy="15" r="12" fill="#eef2f0" stroke="#d0d4d2" strokeWidth="2" />
            <path d="M8 1V14M14 1V12M20 1V14" stroke="#c8d8e4" strokeWidth="2" />
          </I>
        </FilterBlock>
        <I w={34} h={34} ml={filtersGap}>
          <path d="M1 2H24V8L16 15V33H11L9 15L1 8Z" fill="#ccc" stroke="#666" strokeWidth="2" />
          <path d="M17 18H19V20H17ZM22 18H24V20H22ZM27 18H29V20H27ZM17 24H19V26H17ZM22 24H24V26H22ZM27 24H29V26H27ZM17 30H19V32H17ZM22 30H24V32H22ZM27 30H29V32H27Z" fill="#3c9bdc" stroke="#3c9bdc" />
          <path d="M33 2V34" stroke="#999" strokeWidth="1.5" />
        </I>
        <I w={17} h={28} ml={11}>
          <path d="M8.5 0L16 9H11V14H6V9H1Z" fill="#b8d6bf" />
          <path d="M8.5 28L16 19H11V14H6V19H1Z" fill="#f2d2ac" />
        </I>
        <I w={11} h={4} ml={25}>
          <rect width="11" height="4" fill="#6c6c6c" />
        </I>
        <Slider>
          <SliderFill />
          <SliderKnob />
        </Slider>
        <I w={15} h={15} ml={sliderGap}>
          <path d="M0 7.5H15M7.5 0V15" stroke="#666" strokeWidth="3.5" />
        </I>
        <ZoomBox>
          <ZoomText>150%</ZoomText>
          <Caret />
        </ZoomBox>
        <Sep $h={26} $ml={10} />
        <Refresh ml={12} />
      </PaneStatus>
    </PaneBody>
  </Pane>
);

const App = () => (
  <Shell>
    <Global />
    <TitleBar>
      <Qat>
        <I w={28} h={28}>
          <path d="M1 7H8V3H19V7H27V27H1Z" fill="#3d9bd9" />
          <path d="M12 27L24 12L27 14V27Z" fill="#cfe7c8" />
          <circle cx="19" cy="8" r="6" fill="#f3cc4a" stroke="#fff" strokeWidth="1.5" />
        </I>
        <I w={28} h={28} ml={21}>
          <path d="M1 7H8V2H19V7H27V27H1Z" fill="#3d9bd9" />
          <path d="M8 7V3H19V7" stroke="#3d9bd9" strokeWidth="2" />
          <path d="M5 27L8 12H27L24 27Z" fill="#b7e0f0" />
          <path d="M12 27L24 14L24 27Z" fill="#7fbf83" />
        </I>
        <I w={29} h={28} ml={21}>
          <rect x="6" y="1" width="13" height="10" fill="none" stroke="#ccc" strokeWidth="2" />
          <rect x="1" y="9" width="20" height="18" fill="#e6e6e6" stroke="#c8c8c8" strokeWidth="2" />
          <rect x="21" y="8" width="7" height="14" fill="#eee" stroke="#ccc" />
          <rect x="6" y="18" width="10" height="9" fill="#fff" stroke="#bbb" />
        </I>
        <I w={26} h={28} ml={17}>
          <path d="M4 9H15A8 8 0 0 1 15 26H9" stroke="#3c9bdc" strokeWidth="3" />
          <path d="M10 2L3 9L10 16" stroke="#3c9bdc" strokeWidth="3" />
        </I>
        <Chevron ml={16} w={11} h={7} color="#555" sw={2} />
        <I w={26} h={28} ml={10}>
          <path d="M22 9H11A8 8 0 0 0 11 26H17" stroke="#bcdcf2" strokeWidth="3" />
          <path d="M16 2L23 9L16 16" stroke="#bcdcf2" strokeWidth="3" />
        </I>
        <Chevron ml={17} w={11} h={7} color="#555" sw={2} />
        <I w={15} h={20} ml={22}>
          <path d="M1 2H14M1 9L7.5 18L14 9" stroke="#666" strokeWidth="1.8" />
        </I>
      </Qat>
      <AppName>ArcGISPro</AppName>
      <CommandBox>
        <Magnifier color="#666" />
        Command Search (Alt+Q)
      </CommandBox>
      <UserArea>
        <UserName>{'{R} - Escuela Colombiana de Ingeniería Julio Garavito'}</UserName>
        <Avatar>{'{R}'}</Avatar>
        <I w={24} h={30} ml={29}>
          <path d="M12 2C6 6 7 16 5 21L2 24H22L19 21C17 16 18 6 12 2Z" stroke="#666" strokeWidth="1.6" />
          <path d="M10 27H14" stroke="#666" strokeWidth="2" />
        </I>
        <Help>?</Help>
        <I w={16} h={2} ml={60}>
          <rect width="16" height="2" fill="#666" />
        </I>
        <I w={17} h={18} ml={59}>
          <path d="M1 5H12V17H1ZM5 5V1H16V13H12" stroke="#666" strokeWidth="1.6" />
        </I>
        <Close ml={59} s={18} color="#666" />
      </UserArea>
    </TitleBar>
    <Ribbon>
      {[
        ['Project', 132],
        ['Map', 102],
        ['Insert', 113],
        ['Analysis', 137],
        ['View', 106],
        ['Edit', 95],
        ['Imagery', 141],
        ['Share', 115],
        ['Arc Hydro', 159],
        ['Help', 111],
      ].map(([label, w]) => (
        <RibbonTab key={label} $w={w}>
          {label}
        </RibbonTab>
      ))}
      <ContextGroup>
        <RibbonTab $w={182}>Raster Layer</RibbonTab>
        <RibbonTab $w={60}>Data</RibbonTab>
      </ContextGroup>
    </Ribbon>
    <Workspace>
      <Contents>
        <ContentsHead>
          <ContentsTitle>Contents</ContentsTitle>
          <Chevron w={13} h={8} color="#444" />
          <I w={12} h={22} ml={16}>
            <path d="M3 1H9V11L11 13H1L3 11ZM6 13V22" stroke="#444" strokeWidth="2" fill="#444" />
          </I>
          <Close ml={16} s={17} />
        </ContentsHead>
        <SearchRow>
          <I w={24} h={30}>
            <path d="M1 1H23L15 12V29H9V12Z" fill="#8f8f8f" stroke="#777" />
            <path d="M4 2H20L14 8H10Z" fill="#e0e0e0" />
          </I>
          <SearchBox>
            <SearchLabel>Search</SearchLabel>
            <Magnifier />
            <Chevron ml={18} w={13} h={8} color="#666" />
          </SearchBox>
        </SearchRow>
        <ViewTools>
          <ContentsIcons />
          <ViewUnderline />
        </ViewTools>
        <DrawingOrder>Drawing Order</DrawingOrder>
        <Row>
          <Expander $w={17}>
            <Open />
          </Expander>
          <MapThumb ml={7} />
          <RowBody $gap={0}>
            <MapName>Map</MapName>
          </RowBody>
        </Row>
        {LAYERS_TOP.map((name) => (
          <Layer key={name} name={name} />
        ))}
        <Layer name="DTM_Bogota2020_9377_Limit.tif" open checked selected />
        <Legend color="#f47f81" />
        <Layer name="DTM_Bogota2014_9377.tif" />
        <Layer name="DTM_Bogota2014_9377_Limit.tif" open checked />
        <Legend color="#e69900" />
        <Layer name="DSM_AlosPalsar_9377.tif" />
        <Layer name="DSM_AlosPalsar_9377_Fil.tif" />
        <Layer name="DSM_AlosPalsar_9377_Fit.tif" />
        <Layer name="World Imagery" none />
        <Row>
          <Expander $open>
            <Open />
          </Expander>
          <RowBody>
            <SectionName>Standalone Tables</SectionName>
          </RowBody>
        </Row>
        <Row $h={44}>
          <Expander />
          <RowBody $gap={12}>
            <TableGlyph w={26} h={26} />
            <StandaloneName>CUNDINAMARCA_SUELOS_VF_CARACTER1_Stat</StandaloneName>
          </RowBody>
        </Row>
      </Contents>
      <MapColumn>
        <MapTabRow>
          <MapTab>
            <MapThumb s={27} border="#ddd" />
            <MapTabLabel>Map</MapTabLabel>
            <Close s={17} color="#fff" />
          </MapTab>
          <TabMenu>
            <Chevron w={13} h={8} color="#666" />
          </TabMenu>
        </MapTabRow>
        <BlueRule />
        <MapCanvas>
          <StudyArea />
        </MapCanvas>
        <MapStatus>
          <ScaleBox>
            1:248,510
            <Caret />
          </ScaleBox>
          <Sep $ml={8} />
          <ToggleOn>
            <I w={30} h={30}>
              <path d="M2 2H18V18H2ZM10 2V18M2 10H18" stroke="#8a8a8a" strokeWidth="2" />
              <path d="M22 14V29M14 22H29" stroke="#666" strokeWidth="2" />
            </I>
          </ToggleOn>
          <I w={24} h={26} ml={7}>
            <path d="M1 1H23V25H1ZM8 1V25M16 1V25M1 7H23M1 13H23M1 19H23" stroke="#b5b5b5" strokeWidth="1.5" />
          </I>
          <I w={30} h={30} ml={9}>
            <rect x="1" y="4" width="8" height="5" fill="#fff" stroke="#666" />
            <path d="M24 1V11M19 6H29" stroke="#555" strokeWidth="2" />
            <path d="M3 26L22 8L29 26Z" fill="#cbe7f5" />
            <path d="M8 20L18 10" stroke="#3c9bdc" strokeDasharray="3 2" strokeWidth="2" />
            <rect x="20" y="15" width="8" height="5" fill="#fff" stroke="#666" />
            <rect x="1" y="24" width="5" height="5" fill="#53a24a" />
          </I>
          <I w={30} h={32} ml={6}>
            <rect x="1" y="1" width="14" height="14" fill="#d7ecd2" />
            <path d="M1 15H29M15 1V31" stroke="#888" strokeDasharray="3 2" strokeWidth="1.5" />
            <rect x="12" y="12" width="6" height="6" fill="#777" />
          </I>
          <I w={28} h={32} ml={7}>
            <path d="M1 25V7L12 25V7" stroke="#4ba4e0" strokeWidth="3.5" />
            <path d="M14 1V32" stroke="#666" strokeWidth="1.5" />
            <path d="M15 30L27 13" stroke="#777" />
            <path d="M19 2C24 4 24 8 22 11" stroke="#3c9bdc" strokeWidth="2" />
          </I>
          <Chevron ml={12} w={12} h={8} color="#222" sw={2} />
          <Sep $ml={15} />
          <Coords>74.1382818°W 4.6116912°N</Coords>
          <Chevron w={13} h={8} color="#444" sw={2} />
          <StatusRight>
            <Sep />
            <I w={34} h={36} ml={13}>
              <rect x="14" y="1" width="18" height="18" fill="#dcecf5" stroke="#bbb" strokeWidth="1.5" />
              <path d="M18 2L23 10L31 4" stroke="#aaa" />
              <circle cx="10" cy="18" r="8" fill="#eef6fb" stroke="#9dc9e6" strokeWidth="2" />
              <path d="M15 24L22 32" stroke="#e3b98f" strokeWidth="3" />
            </I>
            <SelectedLabel>Selected Features: 0</SelectedLabel>
            <Sep />
            <I w={21} h={25} ml={16}>
              <rect x="1" y="1" width="19" height="23" rx="2" fill="#f3f3f3" stroke="#bbb" strokeWidth="1.5" />
              <path d="M5 2L9 11L10 23M9 11L19 7" stroke="#bbb" />
            </I>
            <Sep $ml={16} />
            <PauseBar $ml={14} />
            <PauseBar $ml={6} />
            <Sep $ml={15} />
            <Refresh ml={10} />
          </StatusRight>
        </MapStatus>
        <Panes>
          <TablePane
            name="DTM_Bogota2014_9377_Limit.tif"
            count="19804189"
            tabW={388}
            labelW={312}
            cols="44px 75px 96px 148px"
            selW={358}
            filtersGap={7}
            sliderGap={10}
          />
          <TablePane
            name="DTM_Bogota2020_9377_Limit.tif"
            count="2418464635"
            tabW={385}
            labelW={309}
            cols="44px 75px 96px 179px"
            selW={356}
            filtersGap={7}
            sliderGap={10}
          />
        </Panes>
      </MapColumn>
      <Rail>
        {RAIL.map(([label, h, gap]) => (
          <RailTab key={label} $h={h} $gap={gap}>
            <RailText>{label}</RailText>
          </RailTab>
        ))}
      </Rail>
    </Workspace>
  </Shell>
);

export default App;
